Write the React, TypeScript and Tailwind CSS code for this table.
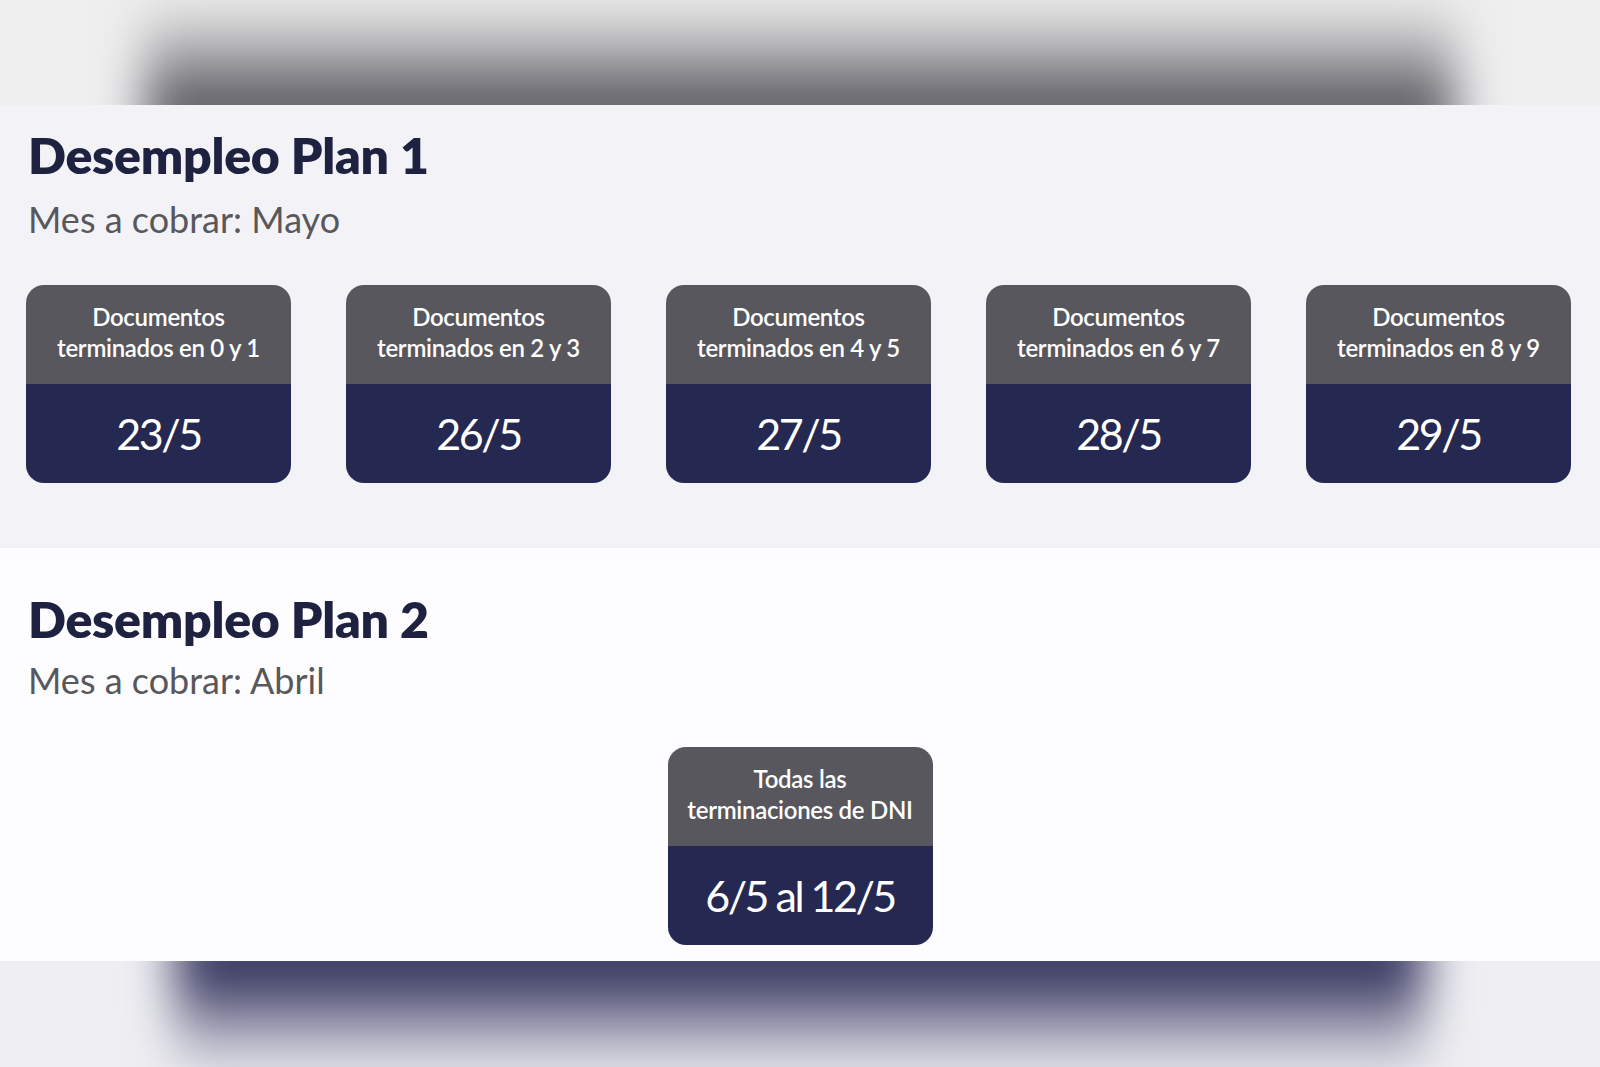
const plan1 = [
  { label: "terminados en 0 y 1", date: "23/5" },
  { label: "terminados en 2 y 3", date: "26/5" },
  { label: "terminados en 4 y 5", date: "27/5" },
  { label: "terminados en 6 y 7", date: "28/5" },
  { label: "terminados en 8 y 9", date: "29/5" },
];

function DateCard({ top, bottom, date }: { top: string; bottom: string; date: string }) {
  return (
    <div className="w-[265px] shrink-0 rounded-[18px] overflow-hidden text-white text-center">
      <div className="h-[99px] pb-[5px] bg-[#57575d] flex flex-col items-center justify-center text-[24px] leading-[31px] font-semibold tracking-[-0.3px]">
        <span>{top}</span>
        <span>{bottom}</span>
      </div>
      <div className="h-[99px] bg-[#252850] flex items-center justify-center text-[43px] leading-none tracking-[-2.5px]">
        {date}
      </div>
    </div>
  );
}

export default function App() {
  return (
    <div className="w-[1600px] h-[1067px] overflow-hidden flex flex-col bg-[#efeff0] font-['Lato',sans-serif]">
      {/* blurred top edge of the frame */}
      <div className="h-[105px] shrink-0 overflow-hidden flex justify-center">
        <div className="w-[1310px] h-[150px] -mt-[4px] shrink-0 blur-[24px] bg-[linear-gradient(to_bottom,#efefef_0%,#bdbdbf_30%,#7c7b81_58%,#5c5b63_72%,#55545c_100%)]" />
      </div>

      <section className="h-[443px] shrink-0 bg-[#f3f3f7] pt-[25px] px-[26px]">
        <h2 className="pl-[2px] text-[50px] leading-none font-extrabold tracking-[-0.3px] text-[#1e2140]">Desempleo Plan 1</h2>
        <p className="pl-[2px] mt-[21px] text-[36px] leading-none text-[#58585c]">Mes a cobrar: Mayo</p>
        <div className="mt-[48px] flex gap-[55px]">
          {plan1.map((c) => (
            <DateCard key={c.date} top="Documentos" bottom={c.label} date={c.date} />
          ))}
        </div>
      </section>

      <section className="h-[413px] shrink-0 bg-[#fdfcfe] pt-[46px] px-[26px]">
        <h2 className="pl-[2px] text-[50px] leading-none font-extrabold tracking-[-0.3px] text-[#1e2140]">Desempleo Plan 2</h2>
        <p className="pl-[2px] mt-[18px] text-[36px] leading-none text-[#58585c]">Mes a cobrar: Abril</p>
        <div className="mt-[49px] flex justify-center">
          <DateCard top="Todas las" bottom="terminaciones de DNI" date="6/5 al 12/5" />
        </div>
      </section>

      {/* blurred bottom edge of the frame */}
      <div className="flex-1 overflow-hidden flex justify-center bg-[#efeff3]">
        <div className="w-[1250px] h-[170px] -mt-[40px] shrink-0 blur-[24px] bg-[linear-gradient(to_bottom,#2f2f5a_0%,#34345e_25%,#5a5a7c_42%,#9a9ab0_60%,#d4d4de_80%,#ececf1_100%)]" />
      </div>
    </div>
  );
}
